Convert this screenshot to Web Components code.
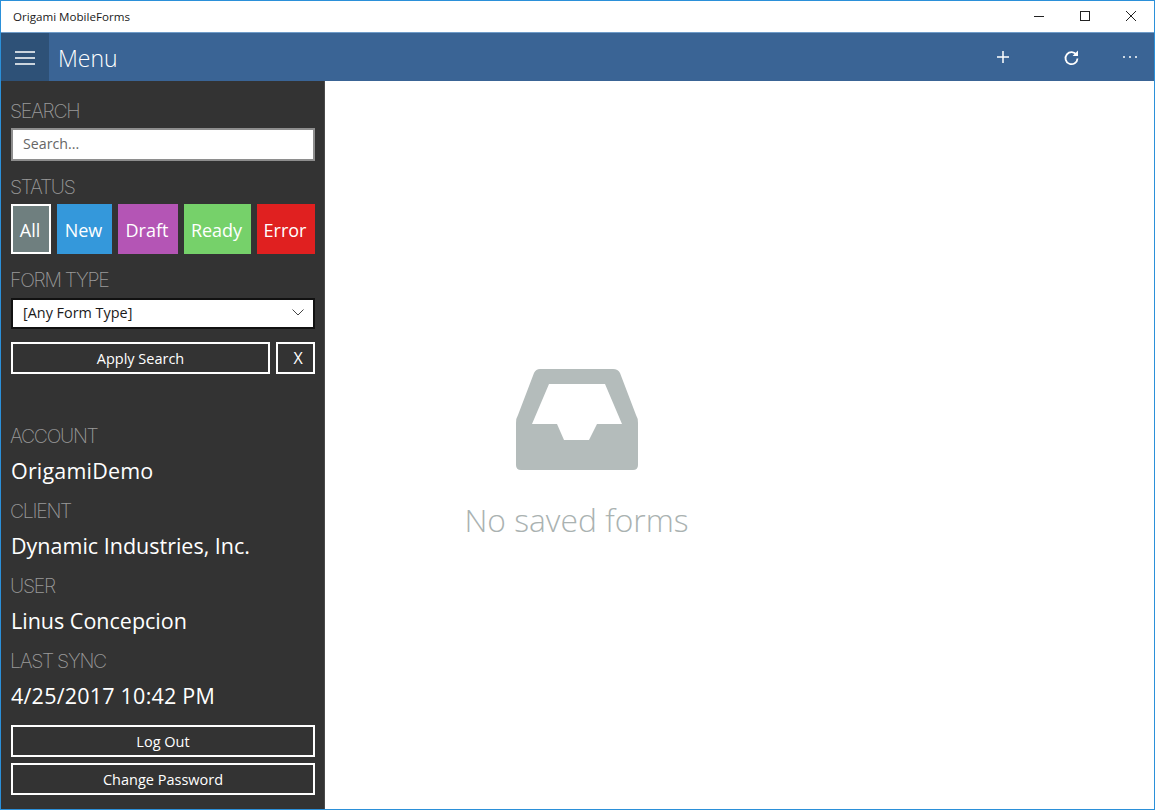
<!DOCTYPE html>
<html lang="en"><head><meta charset="utf-8"><title>Origami MobileForms</title>
<style>
html,body{margin:0;padding:0;height:100%;background:#fff;overflow:hidden}
body{font-family:"Open Sans","Noto Sans",sans-serif}
</style></head><body>
<app-window>
  <title-bar>Origami MobileForms</title-bar>
  <app-header>Menu</app-header>
  <main-area>
    <side-panel></side-panel>
    <empty-state>No saved forms</empty-state>
  </main-area>
</app-window>
<script>
function el(name, css, html, init){
  customElements.define(name, class extends HTMLElement{
    constructor(){super();const s=this.attachShadow({mode:'open'});s.innerHTML='<style>'+css+'</style>'+html;}
    connectedCallback(){ if(init) init(this); }
  });
}
const FONT='"Open Sans","Noto Sans",sans-serif';
el('app-window',`:host{display:flex;flex-direction:column;box-sizing:border-box;width:1155px;height:810px;border:1px solid #2b90d9;background:#fff;font-family:${FONT}}`,`<slot></slot>`);
el('title-bar',`:host{display:flex;align-items:center;height:31px;flex:none;background:#fff;color:#1a1a1a;font-size:11.6px;padding-left:12px;border-bottom:1px solid #6f9cc9;}
 .t{flex:1;padding-bottom:1px}
 .c{display:flex;height:100%;padding-bottom:2px;box-sizing:border-box}
 .c div{width:46px;display:flex;align-items:center;justify-content:center}
 svg{display:block}`,
 `<div class="t"><slot></slot></div><div class="c">
 <div><svg width="12" height="12" viewBox="0 0 12 12"><path d="M1 6.500H11" stroke="#222" stroke-width="1"/></svg></div>
 <div><svg width="12" height="12" viewBox="0 0 12 12"><rect x="1.500" y="1.500" width="9" height="9" fill="none" stroke="#222" stroke-width="1"/></svg></div>
 <div><svg width="12" height="12" viewBox="0 0 12 12"><path d="M1 1L11 11M11 1L1 11" stroke="#222" stroke-width="1"/></svg></div>
 </div>`);
el('app-header',`:host{display:flex;align-items:stretch;height:48px;flex:none;background:#3a6495;color:#fff;}
 .b{width:48px;background:#2e5177;display:flex;align-items:center;justify-content:center;padding-top:1px;box-sizing:border-box}
 .t{flex:1;display:flex;align-items:center;padding-left:9px;padding-top:1px;font-size:23px;font-weight:300}
 .a{display:flex;align-items:center}
 .a div{display:flex;align-items:center;justify-content:center}
 svg{display:block}`,
 `<div class="b"><svg width="22" height="16" viewBox="0 0 22 16"><path d="M1 2H21M1 8H21M1 14H21" stroke="#fff" stroke-width="1.600"/></svg></div>
 <div class="t"><slot></slot></div>
 <div class="a">
 <div style="width:68px"><svg width="16" height="16" viewBox="0 0 16 16"><path d="M8 2V14M2 8H14" stroke="#fff" stroke-width="1.500"/></svg></div>
 <div style="width:68px;margin-right:1px"><svg width="17" height="17" viewBox="0 0 17 17"><path d="M13.600 6A6 6 0 1 0 14.500 9.500" fill="none" stroke="#fff" stroke-width="1.800"/><path d="M15 1.600V7H9.600Z" fill="#fff"/></svg></div>
 <div style="width:48px"><svg width="16" height="4" viewBox="0 0 16 4"><circle cx="2" cy="2" r="1" fill="#fff"/><circle cx="8" cy="2" r="1" fill="#fff"/><circle cx="14" cy="2" r="1" fill="#fff"/></svg></div>
 </div>`);
el('main-area',`:host{display:flex;flex:1;min-height:0}`,`<slot></slot>`);
el('filter-label',`:host{display:block;margin-left:-1px;font-family:Inter,"Liberation Sans",sans-serif;font-size:19.500px;font-weight:200;color:#9a9a9a;line-height:20px;letter-spacing:-1.300px;height:20px;white-space:nowrap}`,`<slot></slot>`);
el('status-chip',`:host{display:flex;align-items:center;justify-content:center;box-sizing:border-box;height:50px;color:#fff;font-size:18px;background:var(--c);border:1px solid var(--c);padding:2px 2px 0 0}
 :host([active]){border:2px solid #fff}`,`<slot></slot>`);
el('outline-button',`:host{display:flex;align-items:center;justify-content:center;box-sizing:border-box;height:32px;border:2px solid #fff;color:#fff;font-size:14.500px}`,`<slot></slot>`);
el('search-box',`:host{display:flex;align-items:center;box-sizing:border-box;height:33px;background:#fff;border:2px solid #8e8e8e;color:#666;font-size:14.200px;padding:0 0 2px 10px}`,`<slot></slot>`);
el('type-select',`:host{display:flex;align-items:center;justify-content:space-between;box-sizing:border-box;height:31px;background:#fff;border:2px solid #111;color:#1a1a1a;font-size:14.400px;padding:0 9px 2px 10px}
 svg{display:block}`,`<slot></slot><svg width="12" height="7" viewBox="0 0 12 7"><path d="M.5 .5L6 6L11.500 .5" fill="none" stroke="#444" stroke-width="1"/></svg>`);
el('info-field',`:host{display:block;height:75px}
 .v{font-size:21.500px;color:#fff;line-height:30px;margin-top:10px;white-space:nowrap}`,
 `<filter-label><slot name="k"></slot></filter-label><div class="v"><slot></slot></div>`);
el('side-panel',`:host{display:flex;flex-direction:column;box-sizing:border-box;width:324px;flex:none;background:#333;padding:20px 9px 0 10px;border-right:1px solid #4a4a4a}
 .row{display:flex;gap:6px}
 search-box{margin-top:7px}
 .l2{margin-top:16px}
 .chips{margin-top:7px}
 .l3{margin-top:16px}
 type-select{margin-top:8px}
 .act{margin-top:13px}
 .info{margin-top:52px}
 .x{padding-left:5px;font-size:16px}
 .btns{margin-top:-1px;display:flex;flex-direction:column;gap:6px}
 `,
 `<filter-label>SEARCH</filter-label>
 <search-box>Search...</search-box>
 <filter-label class="l2">STATUS</filter-label>
 <div class="row chips">
  <status-chip active style="width:40px;--c:#6f7f7f">All</status-chip>
  <status-chip style="width:55px;--c:#3498db">New</status-chip>
  <status-chip style="width:60px;--c:#b455b5">Draft</status-chip>
  <status-chip style="width:67px;--c:#76d16a">Ready</status-chip>
  <status-chip style="width:58px;--c:#e02020">Error</status-chip>
 </div>
 <filter-label class="l3">FORM TYPE</filter-label>
 <type-select>[Any Form Type]</type-select>
 <div class="row act">
  <outline-button style="width:259px">Apply Search</outline-button>
  <outline-button class="x" style="width:39px">X</outline-button>
 </div>
 <div class="info">
  <info-field><span slot="k">ACCOUNT</span><span style="letter-spacing:.18px">OrigamiDemo</span></info-field>
  <info-field><span slot="k">CLIENT</span>Dynamic Industries, Inc.</info-field>
  <info-field><span slot="k">USER</span>Linus Concepcion</info-field>
  <info-field><span slot="k">LAST SYNC</span><span style="letter-spacing:.22px">4/25/2017 10:42 PM</span></info-field>
 </div>
 <div class="btns"><outline-button>Log Out</outline-button><outline-button>Change Password</outline-button></div>`);
el('empty-state',`:host{display:flex;flex:1;flex-direction:column;align-items:center;box-sizing:border-box;padding-top:287px;padding-right:326px;color:#aab2b1;font-size:31.800px}
 svg{display:block}
 .t{margin-top:27px;line-height:44px;font-weight:300;white-space:nowrap}`,
 `<svg width="122" height="103" viewBox="0 0 122 103"><path fill-rule="evenodd" fill="#b4bcbb" d="M24 1H97Q102 1 104 5L120 47Q122 50 122 55V97Q122 102 117 102H5Q0 102 0 97V55Q0 50 2 47L18 5Q20 1 24 1ZM33 16L16 56H41L48 72H73L81 56H106L89 16Z"/></svg>
 <div class="t"><slot></slot></div>`);
</script>
</body></html>
